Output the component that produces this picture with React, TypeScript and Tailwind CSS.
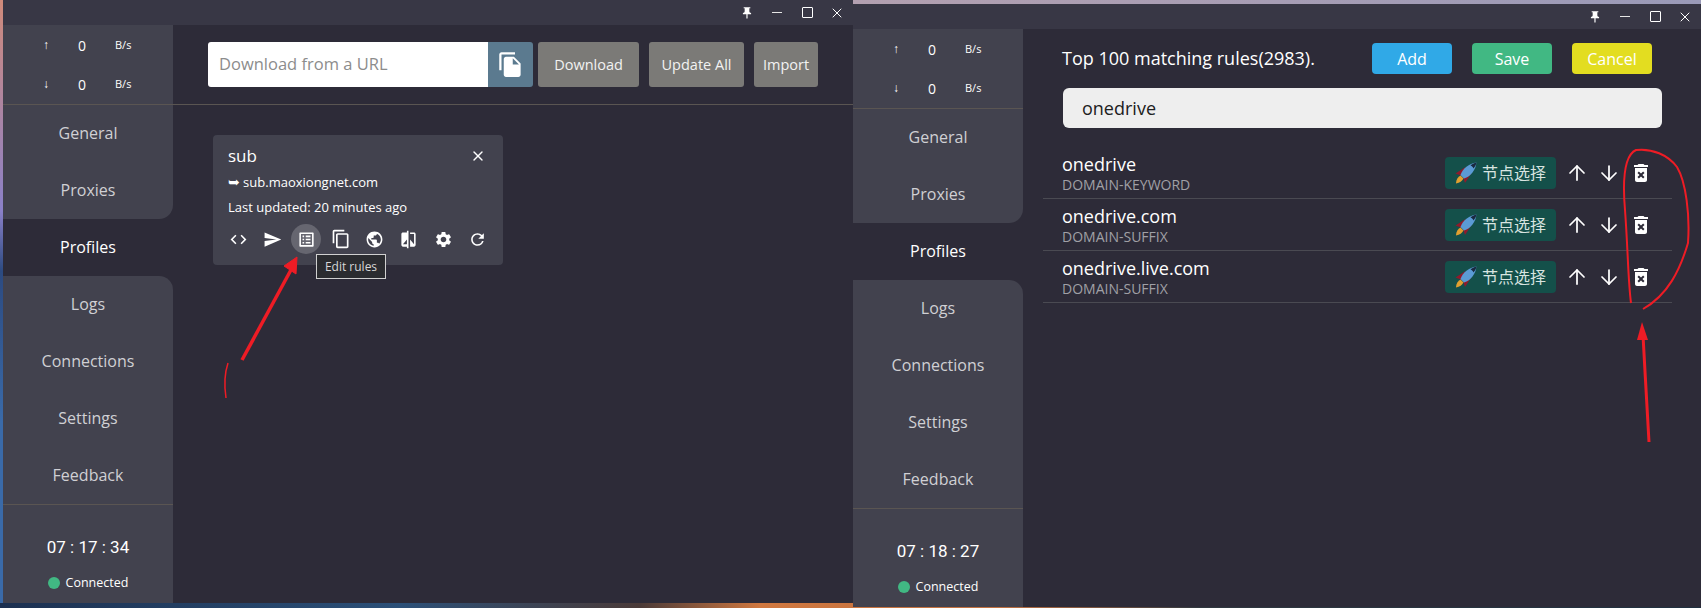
import React from 'react';
import {
  MdCode,
  MdSend,
  MdListAlt,
  MdContentCopy,
  MdPublic,
  MdCompare,
  MdSettings,
  MdRefresh,
  MdFileCopy,
  MdPushPin,
  MdDeleteForever,
} from 'react-icons/md';
import { ArrowUp, ArrowDown, X } from 'lucide-react';

const NAV_TOP = ['General', 'Proxies'];
const NAV_BOTTOM = ['Logs', 'Connections', 'Settings', 'Feedback'];

const RULES = [
  { name: 'onedrive', type: 'DOMAIN-KEYWORD' },
  { name: 'onedrive.com', type: 'DOMAIN-SUFFIX' },
  { name: 'onedrive.live.com', type: 'DOMAIN-SUFFIX' },
];

const FONT = "font-['Open_Sans','Noto_Sans_CJK_SC',sans-serif]";

function TitleBar() {
  return (
    <div className="h-[25px] bg-[#383745] flex items-center justify-end text-white shrink-0 pr-px">
      <div className="w-[30px] flex justify-center">
        <MdPushPin size={14} />
      </div>
      <div className="w-[30px] flex justify-center">
        <div className="w-[10px] h-[1.5px] bg-[#e6e6e6]" />
      </div>
      <div className="w-[30px] flex justify-center">
        <div className="w-[11px] h-[11px] border border-white rounded-[1px]" />
      </div>
      <div className="w-[30px] flex justify-center">
        <X size={16} strokeWidth={1.5} />
      </div>
    </div>
  );
}

function NavItem({ label, active }: { label: string; active?: boolean }) {
  return (
    <div className={`h-[57px] pb-px flex items-center justify-center text-[16px] ${active ? 'text-white' : 'text-[#d0d0d4]'}`}>
      {label}
    </div>
  );
}

function TrafficRow({ arrow }: { arrow: string }) {
  return (
    <div className="flex items-center text-white h-5">
      <span className="ml-[37px] w-[12px] text-center text-[12px] font-bold font-['Liberation_Sans']">{arrow}</span>
      <span className="ml-[20px] w-[20px] text-[14px] text-center">0</span>
      <span className="ml-[23px] text-[11px]">B/s</span>
    </div>
  );
}

function Sidebar({ clock }: { clock: string }) {
  return (
    <div className="w-[170px] shrink-0 flex flex-col bg-[#2d2b38]">
      <div className="h-[79px] bg-[#42424e] flex flex-col pt-[10px] gap-[19px]">
        <TrafficRow arrow="↑" />
        <TrafficRow arrow="↓" />
      </div>
      <div className="h-px bg-[#5a5552]" />
      <div className="bg-[#42424e] rounded-br-[14px]">
        {NAV_TOP.map(n => <NavItem key={n} label={n} />)}
      </div>
      <NavItem label="Profiles" active />
      <div className="bg-[#42424e] rounded-tr-[14px] flex-1 flex flex-col">
        {NAV_BOTTOM.map(n => <NavItem key={n} label={n} />)}
        <div className="h-px bg-[#5a5552]" />
        <div className="flex-1 flex flex-col items-center pt-[30px] text-white">
          <div className="text-[17px] leading-[24px] font-['Roboto',sans-serif]">{clock}</div>
          <div className="flex items-center mt-[14px] text-[12.5px] leading-[20px]">
            <span className="w-3 h-3 rounded-full bg-[#41b883] mr-[6px]" />
            Connected
          </div>
        </div>
      </div>
    </div>
  );
}

function GrayButton({ label, className }: { label: string; className: string }) {
  return (
    <button className={`h-[45px] rounded-[3px] bg-[#7b7a77] text-[#f2f2f2] text-[14.5px] font-medium ${className}`}>
      {label}
    </button>
  );
}

function ProfilesPage() {
  const icons = [MdCode, MdSend, MdListAlt, MdContentCopy, MdPublic, MdCompare, MdSettings, MdRefresh];
  return (
    <div className="flex-1 min-w-0 flex flex-col">
      <div className="h-[80px] shrink-0 border-b border-[#5a5552] flex items-start pt-[17px] pl-[35px]">
        <div className="w-[280px] h-[45px] bg-white rounded-l-[3px] flex items-center pl-[11px] text-[16.5px] text-[#8c8c8c]">
          Download from a URL
        </div>
        <div className="w-[45px] h-[45px] bg-[#5b7a8f] rounded-r-[3px] flex items-center justify-center text-white">
          <MdFileCopy size={27} />
        </div>
        <GrayButton label="Download" className="w-[101px] ml-[5px]" />
        <GrayButton label="Update All" className="w-[95px] ml-[10px]" />
        <GrayButton label="Import" className="w-[64px] ml-[10px]" />
      </div>
      <div className="relative w-[290px] h-[130px] mt-[30px] ml-[40px] bg-[#42424e] rounded-[4px] text-white px-[15px] pt-[8px]">
        <div className="flex items-center justify-between h-[26px]">
          <span className="text-[17px]">sub</span>
          <X size={16} strokeWidth={2} className="mr-[2px]" />
        </div>
        <div className="text-[13px] leading-[20px] mt-[3px]">
          <span className="font-['DejaVu_Sans'] text-[14px]">➥</span> sub.maoxiongnet.com
        </div>
        <div className="text-[13px] leading-[20px] mt-[5px]">Last updated: 20 minutes ago</div>
        <div className="flex mt-[7px] -ml-[5px]">
          {icons.map((Icon, i) => (
            <div key={i} className={`w-[30px] h-[30px] mr-[4.2px] shrink-0 rounded-full flex items-center justify-center ${i === 2 ? 'bg-[#666670]' : ''}`}>
              <Icon size={i === 3 ? 20 : 19} />
            </div>
          ))}
        </div>
        <div className="absolute left-[103px] top-[119px] w-[70px] h-[25px] bg-[#2b2c30] border border-[#d0d0d0] text-[#d8d8d8] text-[12px] flex items-center justify-center">
          Edit rules
        </div>
      </div>
    </div>
  );
}

function RocketIcon() {
  return (
    <svg width="22" height="22" viewBox="0 0 22 22">
      <path d="M0.5 11.5 L10.5 5 L7 14 Z" fill="#8f1a2c" />
      <path d="M10 21 L16.5 11 L8 15 Z" fill="#8f1a2c" />
      <path d="M1 21.5 C1 17.5 3 15 5.5 13.5 L8.5 16.5 C7 19 5 21 1 21.5 Z" fill="#e0a030" />
      <path d="M21.5 0.5 C14 1.5 7.5 6.5 5.5 13 L9 16.5 C16 14.5 20.5 8 21.5 0.5 Z" fill="#5b9bd5" />
      <path d="M21.5 0.5 C19 1 17 2 15.5 3.5 C17 4 18 5 18.5 6.5 C20 4.5 21 3 21.5 0.5 Z" fill="#1a2a40" />
    </svg>
  );
}

function RuleRow({ name, type }: { name: string; type: string }) {
  return (
    <div className="h-[52px] border-b border-[#4a4a52] flex items-center pl-[19px]">
      <div className="flex-1 min-w-0 text-white">
        <div className="text-[18px] leading-[24px]">{name}</div>
        <div className="text-[14px] leading-[17px] text-[#a0a0a6]">{type}</div>
      </div>
      <div className="w-[111px] h-[32px] bg-[#14504a] rounded-[4px] flex items-center pl-[10px] text-[#d8e4e0] text-[16px]">
        <RocketIcon />
        <span className="ml-[5px]">节点选择</span>
      </div>
      <ArrowUp size={24} strokeWidth={1.75} className="text-white ml-[9px]" />
      <ArrowDown size={24} strokeWidth={1.75} className="text-white ml-[8px]" />
      <MdDeleteForever size={24} className="text-white ml-[8px] mr-[19px]" />
    </div>
  );
}

function RulesPage() {
  return (
    <div className="flex-1 min-w-0 flex flex-col pt-[14px] pl-[20px] pr-[29px]">
      <div className="flex items-center h-[31px] pl-[19px]">
        <span className="flex-1 text-[18px] text-white">Top 100 matching rules(2983).</span>
        <button className="w-[80px] h-[31px] rounded-[4px] bg-[#30a9e7] text-white text-[16px]">Add</button>
        <button className="w-[80px] h-[31px] rounded-[4px] bg-[#41b883] text-white text-[16px] ml-[20px]">Save</button>
        <button className="w-[80px] h-[31px] rounded-[4px] bg-[#e3dd20] text-white text-[16px] ml-[20px] mr-[20px]">Cancel</button>
      </div>
      <div className="h-[40px] ml-[20px] mr-[10px] mt-[14px] bg-[#eeeeee] rounded-[6px] flex items-center pl-[19px] text-[18px] text-[#202020]">
        onedrive
      </div>
      <div className="mt-[19px]">
        {RULES.map(r => <RuleRow key={r.name} name={r.name} type={r.type} />)}
      </div>
    </div>
  );
}

function Window({ clock, className, children }: { clock: string; className: string; children: React.ReactNode }) {
  return (
    <div className={`h-[603px] flex flex-col bg-[#2d2b38] shrink-0 ${className}`}>
      <TitleBar />
      <div className="flex-1 min-h-0 flex">
        <Sidebar clock={clock} />
        {children}
      </div>
    </div>
  );
}

export default function App() {
  return (
    <div className={`relative w-[1701px] h-[608px] overflow-hidden flex bg-[linear-gradient(to_right,#1c3050,#2c5078_400px,#4a3a38_640px,#d07840_760px,#c07040_1000px,#303840_1200px,#203040)] ${FONT}`}>
      {/* sliver of wallpaper left of the first window */}
      <div className="w-[3px] h-[603px] shrink-0 bg-[linear-gradient(to_bottom,#d08a7a,#8a80c8_35%,#2c4a80_45%,#3a6aa8_70%,#3a6aa8)]" />
      <Window clock="07 : 17 : 34" className="w-[850px]">
        <ProfilesPage />
      </Window>
      <div className="w-[848px] shrink-0 flex flex-col">
        <div className="h-[4px] bg-[linear-gradient(to_right,#b3a0b0,#9a9ab8)]" />
        <Window clock="07 : 18 : 27" className="w-[848px]">
          <RulesPage />
        </Window>
      </div>
      {/* red pen marks drawn over the screenshot */}
      <svg className="absolute inset-0 pointer-events-none" width="1701" height="608" fill="none">
        <path d="M242 360 L292 268" stroke="#ee1c25" strokeWidth="3.5" />
        <path d="M297 257 L284 266 L296 274 Z" fill="#ee1c25" stroke="#ee1c25" strokeWidth="1" />
        <path d="M228 363 C225 372 224 385 226 398" stroke="#ee1c25" strokeWidth="1.5" />
        <path d="M1631 303 C1628 280 1628 250 1625 210 C1622 175 1625 155 1636 150 C1652 148 1668 155 1677 167 C1686 182 1690 215 1688 243 C1680 270 1668 295 1643 309" stroke="#ee1c25" strokeWidth="2" />
        <path d="M1649 442 C1647 410 1645 370 1643 335" stroke="#ee1c25" strokeWidth="3" />
        <path d="M1642 322 L1637 340 L1648 340 Z" fill="#ee1c25" />
      </svg>
    </div>
  );
}
